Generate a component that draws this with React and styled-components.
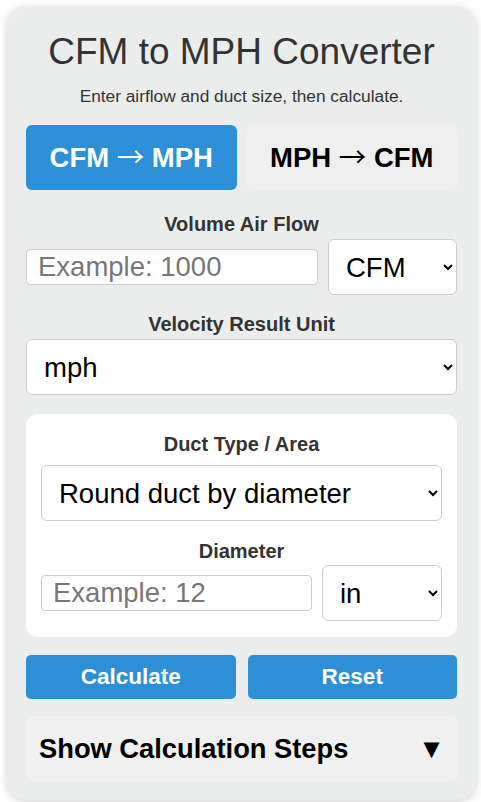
import React, { useState } from "react";
import styled, { createGlobalStyle } from "styled-components";

const GlobalStyle = createGlobalStyle`
  html, body {
    margin: 0;
    padding: 0;
    background: #ffffff;
    font-family: "Liberation Sans", Arial, sans-serif;
  }
`;

const Page = styled.div`
  padding: 6px 5px 0 7px;
  height: 802px;
  box-sizing: border-box;
  overflow: hidden;
`;

const Card = styled.div`
  background: #ebeded;
  border-radius: 20px;
  box-shadow: 0 2px 8px rgba(0, 0, 0, 0.18);
  padding: 24px 19px 19px;
  display: flex;
  flex-direction: column;
  box-sizing: border-box;
  min-height: 794px;
`;

const Title = styled.h1`
  margin: 0;
  text-align: center;
  font-size: 37px;
  font-weight: 400;
  color: #333;
  line-height: 44px;
`;

const Subtitle = styled.p`
  margin: 12px 0 18px;
  text-align: center;
  font-size: 17.3px;
  color: #333;
  line-height: 21px;
`;

const Tabs = styled.div`
  display: grid;
  grid-template-columns: 1fr 1fr;
  gap: 10px;
  margin-bottom: 22px;
`;

const Tab = styled.button`
  height: 65px;
  border: none;
  border-radius: 6px;
  font-family: inherit;
  font-size: 27.5px;
  line-height: 32px;
  font-weight: 700;
  cursor: pointer;
  padding: 0;
  background: ${(p) => (p.$active ? "#2d90d6" : "#efefef")};
  color: ${(p) => (p.$active ? "#fff" : "#000")};
`;

// arrow from the CJK face: long and thin like the reference; line-height 0 keeps its tall metrics out of the line box
const Arrow = styled.span`
  font-family: "Noto Sans CJK JP", "Liberation Sans", sans-serif;
  font-weight: 400;
  line-height: 0;
`;

const Label = styled.div`
  text-align: center;
  font-size: 20px;
  font-weight: 700;
  color: #333;
  line-height: 24px;
  margin-bottom: ${(p) => p.$mb ?? 3}px;
`;

const Row = styled.div`
  display: flex;
  align-items: center;
  gap: 10px;
  margin-bottom: ${(p) => p.$mb || 0}px;
`;

const Input = styled.input`
  flex: 1;
  min-width: 0;
  height: 36px;
  box-sizing: border-box;
  border: 1px solid #ccc;
  border-radius: 4px;
  padding: 0 11px;
  font-family: inherit;
  font-size: 27.5px;
  color: #000;
  background: #fff;
  &::placeholder {
    color: #777;
  }
`;

const Select = styled.select`
  height: 56px;
  box-sizing: border-box;
  width: ${(p) => (p.$w ? `${p.$w}px` : "100%")};
  flex-shrink: 0;
  border: 1px solid #ccc;
  border-radius: 6px;
  padding: 0 10px 0 13px;
  font-family: inherit;
  font-size: 27.5px;
  color: #000;
  background: #fff;
  margin-bottom: ${(p) => p.$mb || 0}px;
`;

const Panel = styled.div`
  background: #fff;
  border-radius: 12px;
  padding: 18px 15px 16px;
  margin-bottom: 18px;
`;

const Actions = styled.div`
  display: grid;
  grid-template-columns: 1fr 1fr;
  gap: 12px;
  margin-bottom: 17px;
`;

const ActionButton = styled.button`
  height: 44px;
  border: none;
  border-radius: 5px;
  background: #2d90d6;
  color: #fff;
  font-family: inherit;
  font-size: 22.5px;
  font-weight: 700;
  cursor: pointer;
  padding: 0;
`;

const Steps = styled.details`
  background: #f0f0f0;
  border-radius: 6px;
`;

const Summary = styled.summary`
  list-style: none;
  display: flex;
  justify-content: space-between;
  align-items: center;
  height: 65px;
  padding: 0 12px 0 13px;
  font-size: 27.3px;
  font-weight: 700;
  color: #000;
  cursor: pointer;
  &::-webkit-details-marker {
    display: none;
  }
`;

export default function App() {
  const [mode, setMode] = useState("cfm");

  return (
    <Page>
      <GlobalStyle />
      <Card>
        <Title>CFM to MPH Converter</Title>
        <Subtitle>Enter airflow and duct size, then calculate.</Subtitle>

        <Tabs>
          <Tab $active={mode === "cfm"} onClick={() => setMode("cfm")}>
            CFM <Arrow>→</Arrow> MPH
          </Tab>
          <Tab $active={mode === "mph"} onClick={() => setMode("mph")}>
            MPH <Arrow>→</Arrow> CFM
          </Tab>
        </Tabs>

        <Label>Volume Air Flow</Label>
        <Row $mb={17}>
          <Input placeholder="Example: 1000" />
          <Select $w={129} defaultValue="cfm">
            <option value="cfm">CFM</option>
            <option value="m3h">m³/h</option>
            <option value="ls">L/s</option>
          </Select>
        </Row>

        <Label>Velocity Result Unit</Label>
        <Select $mb={19} defaultValue="mph">
          <option value="mph">mph</option>
          <option value="fpm">fpm</option>
          <option value="ms">m/s</option>
        </Select>

        <Panel>
          <Label $mb={9}>Duct Type / Area</Label>
          <Select $mb={18} defaultValue="round">
            <option value="round">Round duct by diameter</option>
            <option value="rect">Rectangular duct</option>
            <option value="area">Known area</option>
          </Select>

          <Label $mb={2}>Diameter</Label>
          <Row>
            <Input placeholder="Example: 12" />
            <Select $w={120} defaultValue="in">
              <option value="in">in</option>
              <option value="ft">ft</option>
              <option value="mm">mm</option>
            </Select>
          </Row>
        </Panel>

        <Actions>
          <ActionButton>Calculate</ActionButton>
          <ActionButton>Reset</ActionButton>
        </Actions>

        <Steps>
          <Summary>
            <span>Show Calculation Steps</span>
            <span>▼</span>
          </Summary>
        </Steps>
      </Card>
    </Page>
  );
}
